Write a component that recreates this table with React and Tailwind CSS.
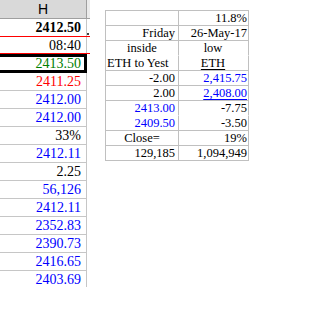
import React from 'react';

const serif = { fontFamily: '"Liberation Serif", "Times New Roman", serif' };

const colRows = [
  { text: '2412.50', cls: 'text-black font-bold' },
  { text: '08:40', cls: 'text-black', red: true },
  { text: '2413.50', cls: 'text-[#008000]', selected: true },
  { text: '2411.25', cls: 'text-[#ff0000]' },
  { text: '2412.00', cls: 'text-[#0000ff]' },
  { text: '2412.00', cls: 'text-[#0000ff]' },
  { text: '33%', cls: 'text-black' },
  { text: '2412.11', cls: 'text-[#0000ff]' },
  { text: '2.25', cls: 'text-black' },
  { text: '56,126', cls: 'text-[#0000ff]' },
  { text: '2412.11', cls: 'text-[#0000ff]' },
  { text: '2352.83', cls: 'text-[#0000ff]' },
  { text: '2390.73', cls: 'text-[#0000ff]' },
  { text: '2416.65', cls: 'text-[#0000ff]' },
  { text: '2403.69', cls: 'text-[#0000ff]' },
];

// summary table rows; la/ra = alignment, lc/rc = colour, ru = underline right cell
const summary = [
  { l: '', r: '11.8%' },
  { l: 'Friday', r: '26-May-17' },
  { l: 'inside', r: 'low', la: 'text-center', ra: 'text-center', noBorder: true },
  { l: 'ETH to Yest', r: 'ETH', la: 'text-left pl-[1px]', ra: 'text-center', ru: true },
  { l: '-2.00', r: '2,415.75', rc: 'text-[#0000ff]' },
  { l: '2.00', r: '2,408.00', rc: 'text-[#0000ff]', ru: true },
  { l: '2413.00', r: '-7.75', lc: 'text-[#0000ff]', noBorder: true },
  { l: '2409.50', r: '-3.50', lc: 'text-[#0000ff]' },
  { l: 'Close=', r: '19%', la: 'text-center' },
  { l: '129,185', r: '1,094,949' },
];

function PriceColumn() {
  return (
    <div className="flex flex-col w-[90px] h-[287px] overflow-hidden">
      {/* column header */}
      <div className="flex h-[19px] shrink-0">
        <div
          className="w-[87px] h-full bg-[#d9d9d9] border-b border-r border-[#9f9f9f] flex items-center justify-center text-[14px] text-black leading-none"
          style={{ fontFamily: '"Liberation Sans", Arial, sans-serif' }}
        >
          H
        </div>
        <div className="w-[3px] h-full bg-[#ebebeb] border-b border-[#9f9f9f]" />
      </div>

      {colRows.map((row, i) => (
        <div key={i} className="relative flex h-[18px] shrink-0">
          <div
            className={`w-[87px] h-full border-r border-[#c6c6c6] ${
              i < 2 ? 'border-b-0' : 'border-b border-b-[#c6c6c6]'
            } flex items-center justify-end pr-[5px] text-[14px] leading-none ${row.cls}`}
            style={serif}
          >
            {row.text}
          </div>
          {i === 0 && (
            <>
              <div className="absolute left-0 bottom-0 w-[90px] h-[1px] bg-[#ff0000]" />
              <div className="absolute left-[87px] top-[14px] w-[2px] h-[2px] bg-[#404040]" />
            </>
          )}
          {i === 1 && (
            <div className="absolute left-0 bottom-[1px] w-[90px] h-[1px] bg-[#ff0000]" />
          )}
          {row.selected && (
            <div className="absolute -left-[3px] -top-[1px] w-[90px] h-[19px] border-[3px] border-black pointer-events-none" />
          )}
        </div>
      ))}
    </div>
  );
}

function SummaryTable() {
  return (
    <div className="mt-[10px] ml-[15px] self-start border-t border-l border-[#c0c0c0] text-[12.5px] leading-none text-black" style={serif}>
      {summary.map((row, i) => {
        const bottom = row.noBorder ? 'border-b border-b-transparent' : 'border-b border-b-[#c0c0c0]';
        return (
          <div key={i} className="flex h-[15px]">
            <div
              className={`w-[73px] h-full border-r border-[#c0c0c0] ${bottom} flex items-center ${
                row.la ? '' : 'justify-end pr-[3px]'
              } ${row.lc || ''}`}
            >
              <span className={`w-full ${row.la || 'text-right'}`}>{row.l}</span>
            </div>
            <div
              className={`w-[70px] h-full border-r border-[#c0c0c0] ${bottom} flex items-center pr-[1px] ${row.rc || ''}`}
            >
              <span className={`w-full ${row.ra || 'text-right'} ${row.ru ? 'underline underline-offset-[2px]' : ''}`}>
                {row.r}
              </span>
            </div>
          </div>
        );
      })}
    </div>
  );
}

export default function App() {
  return (
    <div className="w-[317px] h-[323px] bg-white flex items-start overflow-hidden">
      <PriceColumn />
      <SummaryTable />
    </div>
  );
}
